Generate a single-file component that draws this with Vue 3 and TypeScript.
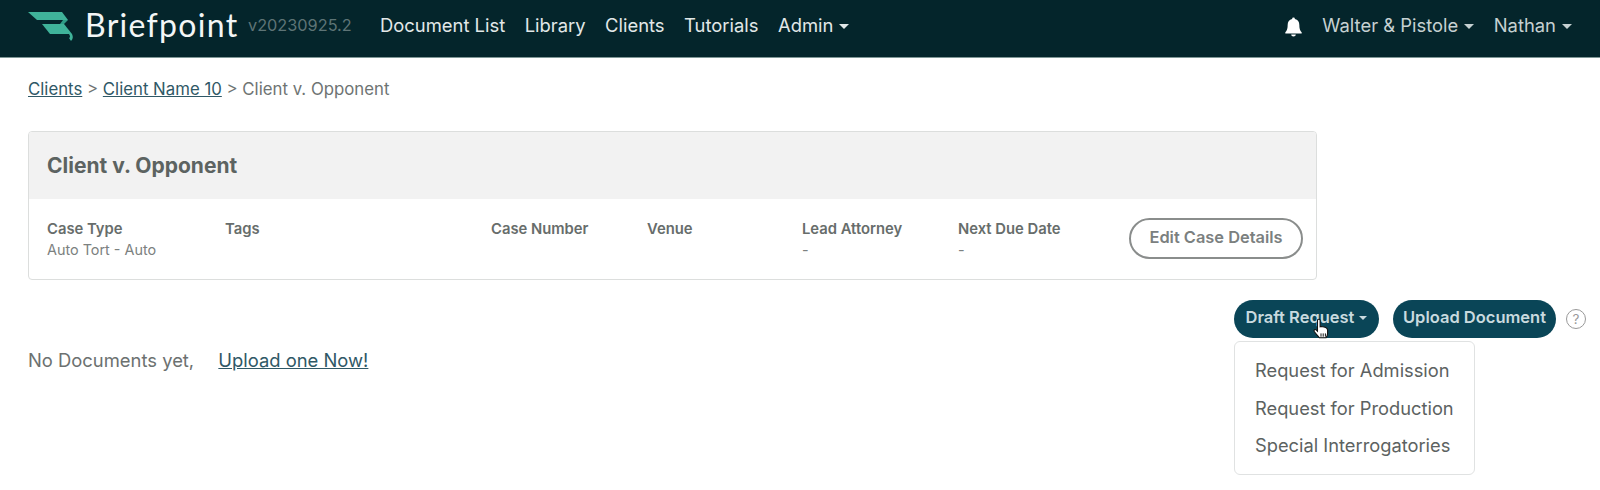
<script setup lang="ts">
const links: string[] = ['Document List', 'Library', 'Clients', 'Tutorials']
const fields: { label: string; value: string }[] = [
  { label: 'Case Type', value: 'Auto Tort - Auto' },
  { label: 'Tags', value: '' },
  { label: 'Case Number', value: '' },
  { label: 'Venue', value: '' },
  { label: 'Lead Attorney', value: '-' },
  { label: 'Next Due Date', value: '-' },
]
const menu: string[] = ['Request for Admission', 'Request for Production', 'Special Interrogatories']
</script>

<template>
  <div class="page">
    <nav class="nav">
      <svg class="logo" viewBox="0 0 46 30" width="46" height="30">
        <path d="M0 1H34L40 9H9Z" fill="#3fb39a" />
        <path d="M40 9L36 13H32L35 9Z" fill="#2f9d87" />
        <path d="M14 13H36L44 23H22Z" fill="#3fb39a" />
        <path d="M44 23Q46 27 43 30L41 27Q43 26 41 23Z" fill="#3fb39a" />
      </svg>
      <span class="brand">Briefpoint</span>
      <span class="version">v20230925.2</span>
      <a v-for="l in links" :key="l" class="nav-link">{{ l }}</a>
      <a class="nav-link caret">Admin</a>
      <svg class="bell" viewBox="0 0 16 18" width="17" height="20">
        <path d="M8 0a1.3 1.3 0 0 1 1.3 1.4C12 2 13.5 4.2 13.5 7c0 4 1 5.5 2.2 7v1H.3v-1C1.5 12.500 2.500 11 2.500 7c0-2.800 1.500-5 4.200-5.600A1.300 1.300 0 0 1 8 0Z" fill="#fff" />
        <path d="M5.800 16h4.400a2.200 2 0 0 1-4.400 0Z" fill="#fff" />
      </svg>
      <a class="nav-link caret firm">Walter &amp; Pistole</a>
      <a class="nav-link caret user">Nathan</a>
    </nav>

    <main class="content">
      <div class="crumbs">
        <a>Clients</a> &gt; <a>Client Name 10</a> &gt; Client v. Opponent
      </div>

      <section class="card">
        <header class="card-head">Client v. Opponent</header>
        <div class="card-body">
          <div v-for="f in fields" :key="f.label" class="field">
            <div class="label">{{ f.label }}</div>
            <div class="value">{{ f.value }}</div>
          </div>
          <button class="edit">Edit Case Details</button>
        </div>
      </section>

      <div class="lower">
        <p class="empty">No Documents yet, <a>Upload one Now!</a></p>
        <div class="actions">
          <div class="dropdown">
            <button class="pill caret-btn">Draft Request</button>
            <ul class="menu">
              <li v-for="m in menu" :key="m">{{ m }}</li>
            </ul>
            <svg class="cursor" viewBox="0 0 16 20" width="18" height="22">
              <path d="M5 1.500c1-.8 2.200-.3 2.200 1V8l1-.3 1.300.2 1.300.3 1.500.5c1 .5 1.700 1.200 1.700 2.500v3c0 1.500-.5 2.500-1.500 3.800H6.500C5.500 16.500 3.500 14.500 2 12.500c-1-1.500.5-2.800 1.800-1.500l1 1V2.500Z" fill="#fff" stroke="#111" stroke-width="1" />
              <path d="M8 14v3M10 14v3M12 14v3" stroke="#111" stroke-width=".9" />
            </svg>
          </div>
          <button class="pill">Upload Document</button>
          <span class="help">?</span>
        </div>
      </div>
    </main>
  </div>
</template>

<style>
html, body { margin: 0; background: #fff; }
</style>

<style scoped>
.page { width: 1600px; height: 490px; overflow: hidden; font-family: Inter, "Liberation Sans", sans-serif; color: #5f6563; }
.nav { height: 49px; padding: 0 28px 8px 28px; border-bottom: 1px solid #7f9796; background: #04252b; display: flex; align-items: center; box-sizing: content-box; }
.logo { margin: 3px 11px 0 0; flex: none; }
.brand { font-family: Lato, sans-serif; font-size: 32px; letter-spacing: 1.300px; color: #f3f6f6; width: 163px; flex: none; }
.version { font-size: 16.300px; color: #5e7476; width: 132px; flex: none; }
.nav-link { font-size: 18.400px; color: #e2e8e8; margin-right: 19.500px; white-space: nowrap; }
.caret::after, .caret-btn::after { content: ""; display: inline-block; margin-left: 6px; vertical-align: 3px; border-top: 5px solid currentColor; border-left: 5px solid transparent; border-right: 5px solid transparent; }
.bell { margin-left: auto; margin-right: 20px; margin-top: 5px; }
.firm { color: #c6d1d2; }
.user { color: #c6d1d2; margin-right: 0; }
.content { padding: 0 28px; }
.crumbs { font-size: 16.800px; line-height: 20px; margin-top: 21px; color: #6e7473; }
.crumbs a { color: #2f5866; text-decoration: underline; }
.card { width: 1289px; height: 149px; margin-top: 32px; border: 1px solid #dcdedd; border-radius: 4px; box-sizing: border-box; overflow: hidden; }
.card-head { height: 67px; background: #f2f2f2; padding: 0 18px; font-size: 21px; font-weight: 700; line-height: 68px; color: #5c6361; }
.card-body { display: grid; grid-template-columns: 178px 266px 156px 155px 156px 171px 173px; padding: 0 0 0 18px; height: 80px; position: relative; }
.field { padding-top: 21px; }
.label { font-size: 14.800px; font-weight: 600; line-height: 19px; color: #676d6b; }
.value { font-size: 14.400px; line-height: 19px; margin-top: 1px; color: #7c8180; }
.edit { margin-top: 19px; width: 174px; height: 41px; border: 2px solid #8a8d8c; border-radius: 21px; background: #fff; font: 600 16.400px Inter, sans-serif; color: #7b807f; padding: 0 0 4px; }
.lower { display: flex; justify-content: space-between; align-items: flex-start; margin-top: 20px; }
.empty { margin: 49px 0 0; font-size: 18.400px; line-height: 22px; color: #6c7170; }
.empty a { margin-left: 19px; color: #2f5866; text-decoration: underline; }
.actions { display: flex; align-items: center; margin-right: -14px; }
.dropdown { position: relative; margin-right: 14px; }
.pill { height: 38px; padding: 0 0 4px; border: none; border-radius: 19px; background: #0a4557; color: #c9dadf; font: 600 16.500px Inter, sans-serif; white-space: nowrap; width: 163px; }
.caret-btn { width: 145px; }
.caret-btn::after { margin-left: 5px; border-width: 4px 4px 0; }
.menu { position: absolute; left: 0; top: 41px; width: 241px; height: 134px; box-sizing: border-box; margin: 0; padding: 10px 0 0 20px; list-style: none; background: #fff; border: 1px solid #e0e2e2; border-radius: 6px; font-size: 18.300px; line-height: 37.500px; color: #5c6261; white-space: nowrap; }
.cursor { position: absolute; left: 78px; top: 18px; }
.help { margin-left: 10px; width: 20px; height: 20px; border: 1px solid #999; border-radius: 50%; box-sizing: border-box; font-size: 13.500px; line-height: 18px; text-align: center; color: #999; }
</style>
